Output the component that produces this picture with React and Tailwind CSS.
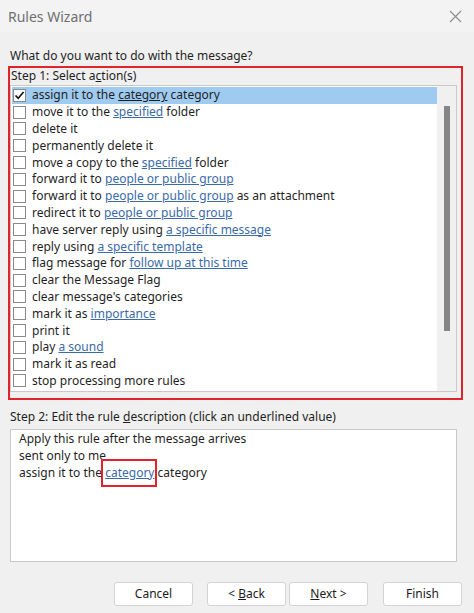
import React from 'react';

const actions = [
  ['assign it to the ', 'category', ' category'],
  ['move it to the ', 'specified', ' folder'],
  ['delete it'],
  ['permanently delete it'],
  ['move a copy to the ', 'specified', ' folder'],
  ['forward it to ', 'people or public group'],
  ['forward it to ', 'people or public group', ' as an attachment'],
  ['redirect it to ', 'people or public group'],
  ['have server reply using ', 'a specific message'],
  ['reply using ', 'a specific template'],
  ['flag message for ', 'follow up at this time'],
  ['clear the Message Flag'],
  ["clear message's categories"],
  ['mark it as ', 'importance'],
  ['print it'],
  ['play ', 'a sound'],
  ['mark it as read'],
  ['stop processing more rules'],
];

const Check = ({ checked }) => (
  <span className="w-[13px] h-[13px] border border-[#8a8a8a] bg-white flex items-center justify-center shrink-0">
    {checked && (
      <svg width="11" height="11" viewBox="0 0 11 11">
        <path d="M1.5 5.5 L4.2 8.3 L9.6 2" fill="none" stroke="#111" strokeWidth="1.6" />
      </svg>
    )}
  </span>
);

const Btn = ({ children }) => (
  <button className="w-[79px] h-[24px] bg-white border border-[#d3d3d3] rounded-[3px] text-[12px] text-[#1b1b1b]">
    {children}
  </button>
);

export default function App() {
  return (
    <div
      className="w-[474px] h-[613px] bg-[#f0f0f0] flex flex-col text-[#1f1f1f] overflow-hidden"
      style={{ fontFamily: '"Segoe UI", "Noto Sans", "Open Sans", sans-serif' }}
    >
      {/* title bar */}
      <div className="h-[32px] flex items-center justify-between pl-[8px] pr-[12px] bg-[#f3f3f3]">
        <span className="text-[14px] text-[#707070]">Rules Wizard</span>
        <svg width="13" height="13" viewBox="0 0 13 13">
          <path d="M1 1 L12 12 M12 1 L1 12" stroke="#8c8c8c" strokeWidth="1.1" />
        </svg>
      </div>

      <div className="pl-[10px] mt-[15px] text-[12px] leading-[18px]">What do you want to do with the message?</div>

      {/* step 1 */}
      <div className="mx-[8px] mt-[1px] w-[455px] border-2 border-[#e1232b] pb-[6px]">
        <div className="pl-[1px] text-[12px] leading-[16px]">
          Step 1: Select a<span className="underline">c</span>tion(s)
        </div>
        <div className="mt-[1px] w-[447px] h-[307px] bg-white border border-[#c9c9c9] flex">
          <div className="flex-1 pt-[1px] pl-[1px]">
            {actions.map((a, i) => (
              <div
                key={i}
                className={`h-[16.8px] flex items-center gap-[6px] pl-[1px] text-[12px] whitespace-nowrap ${
                  i === 0 ? 'bg-[#9fcbf0]' : ''
                }`}
              >
                <Check checked={i === 0} />
                <span>
                  {a[0]}
                  {a[1] && (
                    <span className={i === 0 ? 'underline text-[#1f1f1f]' : 'underline text-[#3b6aa8]'}>{a[1]}</span>
                  )}
                  {a[2]}
                </span>
              </div>
            ))}
          </div>
          <div className="w-[19px] bg-[#f0f0f0] flex justify-center pt-[20px]">
            <div className="w-[6px] h-[225px] bg-[#858585]" />
          </div>
        </div>
      </div>

      {/* step 2 */}
      <div className="pl-[10px] mt-[9px] text-[12px] leading-[16px]">
        Step 2: Edit the rule <span className="underline">d</span>escription (click an underlined value)
      </div>
      <div className="ml-[10px] mt-[4px] w-[447px] h-[133px] bg-white border border-[#c9c9c9] pl-[8px] text-[12px] leading-[17px]">
        <div>Apply this rule after the message arrives</div>
        <div>sent only to me</div>
        <div>
          assign it to the{' '}
          <span className="relative">
            <span className="underline text-[#3b6aa8]">category</span>
            <span className="absolute left-[-4px] right-[-3px] top-[-5px] bottom-[-6px] border-2 border-[#e1232b]" />
          </span>{' '}
          category
        </div>
      </div>

      {/* buttons */}
      <div className="flex items-start mt-[20px] pl-[114px]">
        <Btn>Cancel</Btn>
        <div className="ml-[14px] flex gap-[3px]">
          <Btn>
            &lt; <span className="underline">B</span>ack
          </Btn>
          <Btn>
            <span className="underline">N</span>ext &gt;
          </Btn>
        </div>
        <div className="ml-[15px] flex">
          <Btn>Finish</Btn>
        </div>
      </div>
    </div>
  );
}
